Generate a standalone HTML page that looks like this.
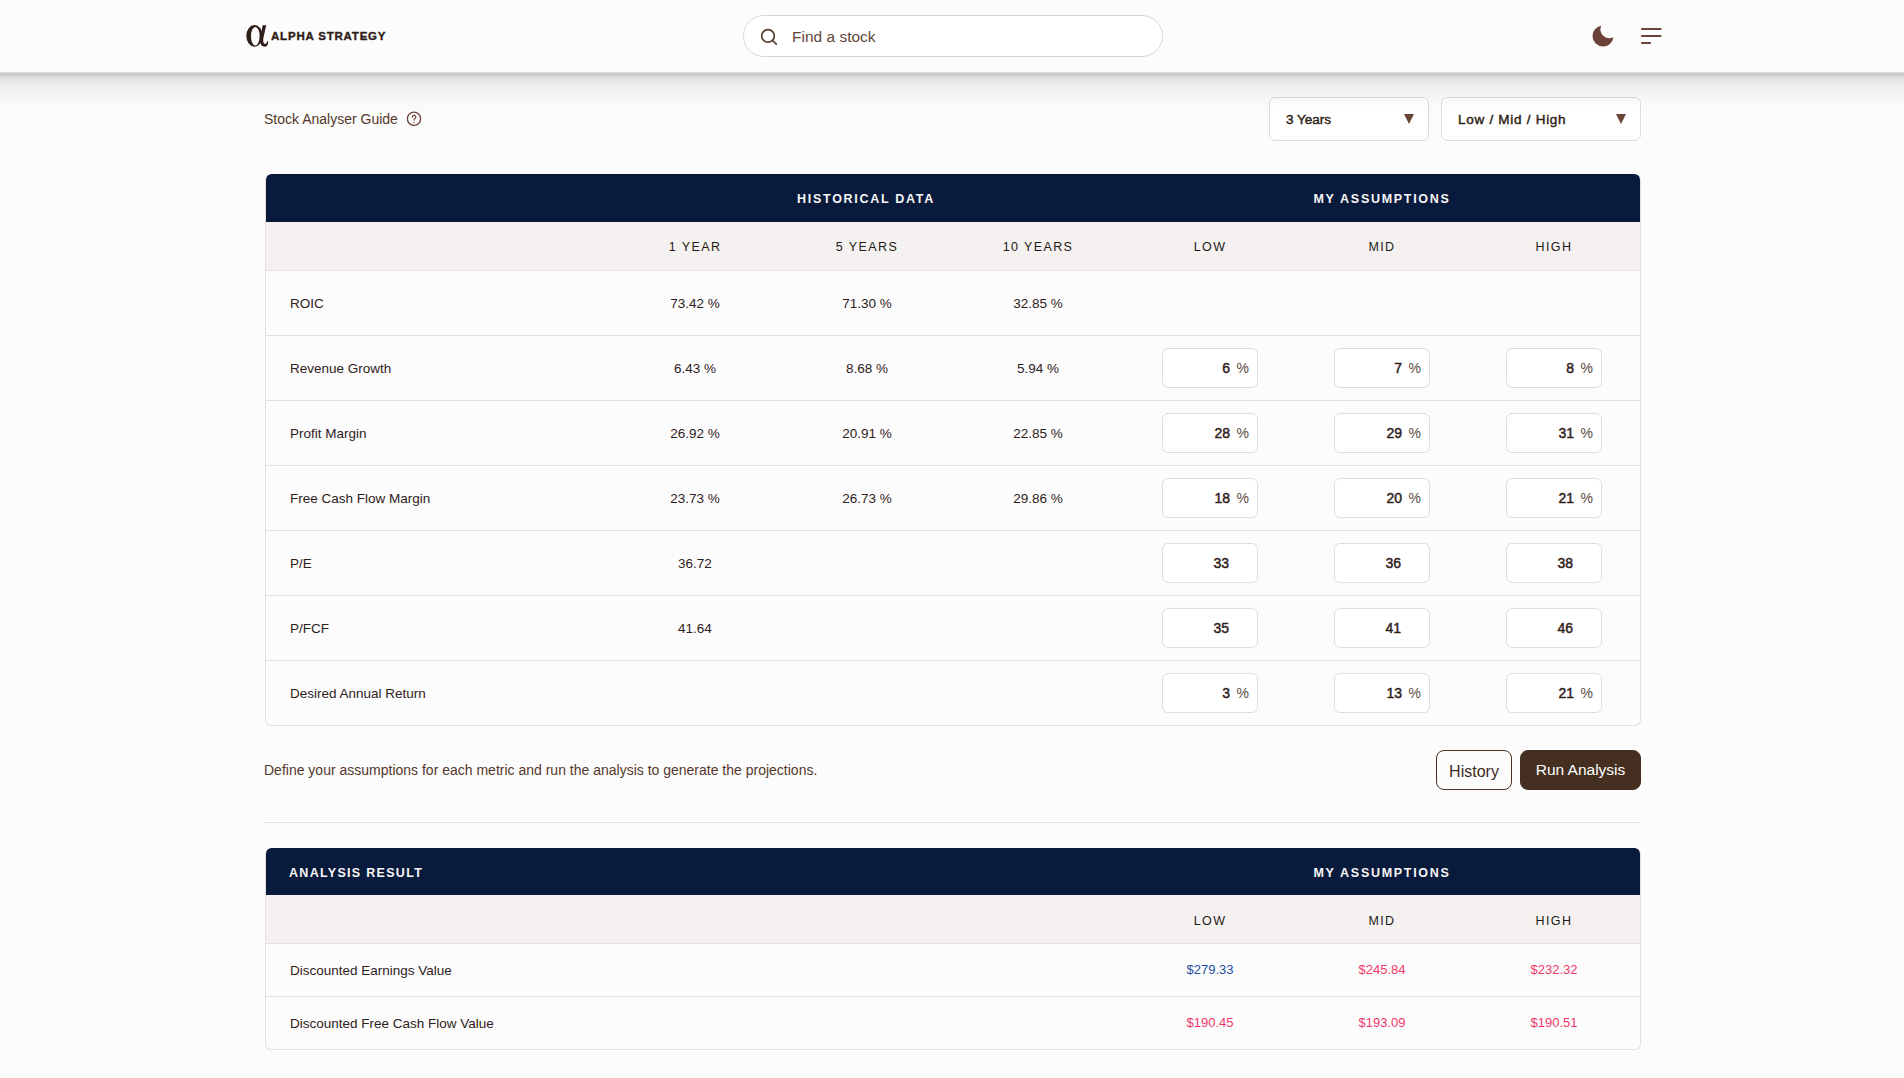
<!DOCTYPE html>
<html><head><meta charset="utf-8">
<style>
*{box-sizing:border-box;margin:0;padding:0}
html,body{width:1904px;height:1078px;overflow:hidden}
body{background:#fcfcfc;font-family:"Liberation Sans",sans-serif;color:#2e211b;position:relative}
.abs{position:absolute}
.hdr{position:absolute;left:0;top:0;width:1904px;height:72px;background:#fdfcfc;z-index:5}
.shd{position:absolute;left:0;top:72px;width:1904px;height:42px;z-index:6;pointer-events:none;background:linear-gradient(to bottom,rgba(0,0,0,.05) 0px,rgba(0,0,0,.2) 1px,rgba(0,0,0,.2) 2px,rgba(0,0,0,.185) 3.5px,rgba(0,0,0,.135) 4.5px,rgba(0,0,0,.12) 5.5px,rgba(0,0,0,.11) 6.5px,rgba(0,0,0,.095) 7.5px,rgba(0,0,0,.083) 9px,rgba(0,0,0,.064) 12px,rgba(0,0,0,.052) 16px,rgba(0,0,0,.044) 19px,rgba(0,0,0,.032) 23px,rgba(0,0,0,.02) 28px,rgba(0,0,0,.012) 34px,rgba(0,0,0,0) 41px)}
.logo-t{position:absolute;left:271px;top:28px;font-weight:bold;font-size:11.5px;color:#2f1d17;line-height:16px;letter-spacing:.8px;white-space:nowrap;-webkit-text-stroke:.35px #2f1d17}
.search{position:absolute;left:743px;top:15px;width:420px;height:42px;border:1px solid #ddd5d3;border-radius:21px;background:#fff}
.search .ph{position:absolute;left:48px;top:11px;font-size:15.5px;color:#5f4536;line-height:20px;white-space:nowrap}
.guide{position:absolute;left:264px;top:110px;font-size:14px;color:#55382b;line-height:18px;white-space:nowrap}
.sel{position:absolute;top:97px;height:44px;border:1px solid #e0dad9;border-radius:6px;background:#fff}
.sel .t{position:absolute;left:16px;top:12.5px;font-size:13.5px;font-weight:normal;-webkit-text-stroke:.45px #2e1f17;color:#2e1f17;line-height:18px;white-space:nowrap}
.sel .arr{position:absolute;top:16px;width:0;height:0;border-left:5.5px solid transparent;border-right:5.5px solid transparent;border-top:10px solid #6b4535}
.tbl{position:absolute;left:265px;width:1376px;border:1px solid #e5dfde;border-top:0;border-radius:6px;overflow:hidden;background:#fdfcfc}
.navy{position:absolute;left:-1px;top:0;width:1376px;height:48px;background:#091b3c;border-radius:6px 6px 0 0}
.navy .h{position:absolute;top:16px;font-size:12.5px;font-weight:bold;color:#f8f6f6;letter-spacing:1.7px;line-height:18px;text-align:center;white-space:nowrap}
.sub{position:absolute;left:0;top:48px;width:100%;height:48px;background:#f5f1f0}
.t2 .navy{height:47px}
.t2 .sub{top:47px}
.t2 .sub .h{top:17px}
.sub .h{position:absolute;top:16px;font-size:12.5px;color:#221a16;letter-spacing:1.4px;line-height:18px;text-align:center;width:172px;white-space:nowrap}
.row{position:absolute;left:0;width:100%;border-top:1px solid #e5dfde}
.row .lab{position:absolute;left:24px;margin-top:1px;font-size:13.5px;color:#2e211b;line-height:18px;white-space:nowrap}
.row .v{position:absolute;margin-top:1px;width:172px;text-align:center;font-size:13.5px;color:#2e211b;line-height:18px;white-space:nowrap}
.t2 .row .v{font-size:13px}
.inp{position:absolute;width:96px;height:40px;border:1px solid #e3dcdb;border-radius:6px;background:#fff}
.inp .n{position:absolute;right:27px;top:10px;font-size:14px;font-weight:normal;-webkit-text-stroke:.45px #2e211b;color:#2e211b;line-height:18px}
.inp .p{position:absolute;right:8px;top:10px;font-size:14px;color:#5a4a40;line-height:18px}
.inp .c{position:absolute;left:0;width:100%;top:10px;text-align:center;font-size:14px;font-weight:bold;color:#2e211b;line-height:18px}
.desc{position:absolute;left:264px;top:761px;font-size:14px;color:#55382b;line-height:18px;white-space:nowrap}
.btn{position:absolute;top:750px;height:40px;border-radius:8px;font-size:16px;line-height:38px;text-align:center;white-space:nowrap}
.btn span{position:relative;top:1.5px}
.hist{left:1436px;width:76px;border:1px solid #4a3022;color:#3d2a1c;background:#fdfcfc}
.run{left:1520px;width:121px;background:#452f20;color:#fff;border:1px solid #452f20;font-size:15.5px}
.hr{position:absolute;left:264px;top:822px;width:1377px;height:1px;background:#e6e0df}
.red{color:#f0386a!important}
.blu{color:#24509e!important}
</style></head><body>
<div class="hdr">
<svg class="abs" style="left:242px;top:20px" width="30" height="32" viewBox="0 0 30 32"><path fill-rule="evenodd" fill="#2f1d17" d="M12.5 5.1 A8.2 10.8 0 1 0 12.5 26.7 A8.2 10.8 0 1 0 12.5 5.1 Z M13.3 6.9 A4.3 9.3 0 1 1 13.3 25.5 A4.3 9.3 0 1 1 13.3 6.9 Z"/><path fill="#2f1d17" d="M20.6 5.2 L24.2 5.2 L21.3 18.2 Q20.8 23.6 23.1 24.1 Q24.8 24.3 25.3 21 L26.3 21.2 Q25.9 26.8 22.7 26.8 Q18.3 26.6 18.2 20.8 L18.6 16.8 Z"/></svg>
<div class="logo-t">ALPHA STRATEGY</div>
<div class="search">
<svg class="abs" style="left:15px;top:11px" width="20" height="20" viewBox="0 0 20 20"><circle cx="9" cy="8.9" r="6.3" fill="none" stroke="#5a3d33" stroke-width="1.7"/><line x1="13.6" y1="13.5" x2="17.3" y2="17.2" stroke="#5a3d33" stroke-width="1.7" stroke-linecap="round"/></svg>
<div class="ph">Find a stock</div>
</div>
<svg class="abs" style="left:1590px;top:23px" width="26" height="26" viewBox="0 0 26 26"><path d="M11.291 2.640 A10.5 10.5 0 1 0 23.426 14.248 A8.93 8.93 0 0 1 11.291 2.640 Z" fill="#6b4237"/></svg>
<svg class="abs" style="left:1640px;top:26px" width="24" height="20" viewBox="0 0 24 20"><g stroke="#6b4237" stroke-width="2.2" stroke-linecap="round"><line x1="2" y1="3" x2="20.5" y2="3"/><line x1="2" y1="10" x2="20.5" y2="10"/><line x1="2" y1="17" x2="10" y2="17"/></g></svg>
</div>
<div class="shd"></div>
<div class="guide">Stock Analyser Guide</div>
<svg class="abs" style="left:405px;top:110px" width="18" height="18" viewBox="0 0 18 18"><circle cx="9" cy="8.75" r="6.6" fill="none" stroke="#6b4237" stroke-width="1.3"/><path d="M7.3 7.1a1.75 1.75 0 1 1 2.6 1.5c-.6.35-.9.7-.9 1.3v.2" fill="none" stroke="#6b4237" stroke-width="1.2" stroke-linecap="round"/><circle cx="9" cy="12.4" r=".65" fill="#6b4237"/></svg>
<div class="sel" style="left:1269px;width:160px"><div class="t">3 Years</div><div class="arr" style="left:134px"></div></div>
<div class="sel" style="left:1441px;width:200px"><div class="t" style="letter-spacing:.72px">Low / Mid / High</div><div class="arr" style="left:174px"></div></div>
<div class="tbl" style="top:174px;height:552px">
<div class="navy"><div class="h" style="left:343px;width:516px">HISTORICAL DATA</div><div class="h" style="left:859px;width:516px">MY ASSUMPTIONS</div></div>
<div class="sub"><div class="h" style="left:343px">1 YEAR</div><div class="h" style="left:515px">5 YEARS</div><div class="h" style="left:686px">10 YEARS</div><div class="h" style="left:858px">LOW</div><div class="h" style="left:1030px">MID</div><div class="h" style="left:1202px">HIGH</div></div>
<div class="row" style="top:96px;height:65px"><div class="lab" style="top:23px">ROIC</div><div class="v" style="left:343px;top:23px">73.42 %</div><div class="v" style="left:515px;top:23px">71.30 %</div><div class="v" style="left:686px;top:23px">32.85 %</div></div>
<div class="row" style="top:161px;height:65px"><div class="lab" style="top:23px">Revenue Growth</div><div class="v" style="left:343px;top:23px">6.43 %</div><div class="v" style="left:515px;top:23px">8.68 %</div><div class="v" style="left:686px;top:23px">5.94 %</div><div class="inp" style="left:896px;top:12px"><span class="n">6</span><span class="p">%</span></div><div class="inp" style="left:1068px;top:12px"><span class="n">7</span><span class="p">%</span></div><div class="inp" style="left:1240px;top:12px"><span class="n">8</span><span class="p">%</span></div></div>
<div class="row" style="top:226px;height:65px"><div class="lab" style="top:23px">Profit Margin</div><div class="v" style="left:343px;top:23px">26.92 %</div><div class="v" style="left:515px;top:23px">20.91 %</div><div class="v" style="left:686px;top:23px">22.85 %</div><div class="inp" style="left:896px;top:12px"><span class="n">28</span><span class="p">%</span></div><div class="inp" style="left:1068px;top:12px"><span class="n">29</span><span class="p">%</span></div><div class="inp" style="left:1240px;top:12px"><span class="n">31</span><span class="p">%</span></div></div>
<div class="row" style="top:291px;height:65px"><div class="lab" style="top:23px">Free Cash Flow Margin</div><div class="v" style="left:343px;top:23px">23.73 %</div><div class="v" style="left:515px;top:23px">26.73 %</div><div class="v" style="left:686px;top:23px">29.86 %</div><div class="inp" style="left:896px;top:12px"><span class="n">18</span><span class="p">%</span></div><div class="inp" style="left:1068px;top:12px"><span class="n">20</span><span class="p">%</span></div><div class="inp" style="left:1240px;top:12px"><span class="n">21</span><span class="p">%</span></div></div>
<div class="row" style="top:356px;height:65px"><div class="lab" style="top:23px">P/E</div><div class="v" style="left:343px;top:23px">36.72</div><div class="inp" style="left:896px;top:12px"><span class="n" style="right:28px">33</span></div><div class="inp" style="left:1068px;top:12px"><span class="n" style="right:28px">36</span></div><div class="inp" style="left:1240px;top:12px"><span class="n" style="right:28px">38</span></div></div>
<div class="row" style="top:421px;height:65px"><div class="lab" style="top:23px">P/FCF</div><div class="v" style="left:343px;top:23px">41.64</div><div class="inp" style="left:896px;top:12px"><span class="n" style="right:28px">35</span></div><div class="inp" style="left:1068px;top:12px"><span class="n" style="right:28px">41</span></div><div class="inp" style="left:1240px;top:12px"><span class="n" style="right:28px">46</span></div></div>
<div class="row" style="top:486px;height:65px"><div class="lab" style="top:23px">Desired Annual Return</div><div class="inp" style="left:896px;top:12px"><span class="n">3</span><span class="p">%</span></div><div class="inp" style="left:1068px;top:12px"><span class="n">13</span><span class="p">%</span></div><div class="inp" style="left:1240px;top:12px"><span class="n">21</span><span class="p">%</span></div></div>
</div>
<div class="desc">Define your assumptions for each metric and run the analysis to generate the projections.</div>
<div class="btn hist"><span>History</span></div>
<div class="btn run"><span style="top:0">Run Analysis</span></div>
<div class="hr"></div>
<div class="tbl t2" style="top:848px;height:202px">
<div class="navy"><div class="h" style="left:24px;text-align:left;letter-spacing:1.3px">ANALYSIS RESULT</div><div class="h" style="left:859px;width:516px">MY ASSUMPTIONS</div></div>
<div class="sub"><div class="h" style="left:858px">LOW</div><div class="h" style="left:1030px">MID</div><div class="h" style="left:1202px">HIGH</div></div>
<div class="row" style="top:95px;height:53px"><div class="lab" style="top:17px">Discounted Earnings Value</div><div class="v blu" style="left:858px;top:16px">$279.33</div><div class="v red" style="left:1030px;top:16px">$245.84</div><div class="v red" style="left:1202px;top:16px">$232.32</div></div>
<div class="row" style="top:148px;height:53px"><div class="lab" style="top:17px">Discounted Free Cash Flow Value</div><div class="v red" style="left:858px;top:16px">$190.45</div><div class="v red" style="left:1030px;top:16px">$193.09</div><div class="v red" style="left:1202px;top:16px">$190.51</div></div>
</div>
</body></html>
